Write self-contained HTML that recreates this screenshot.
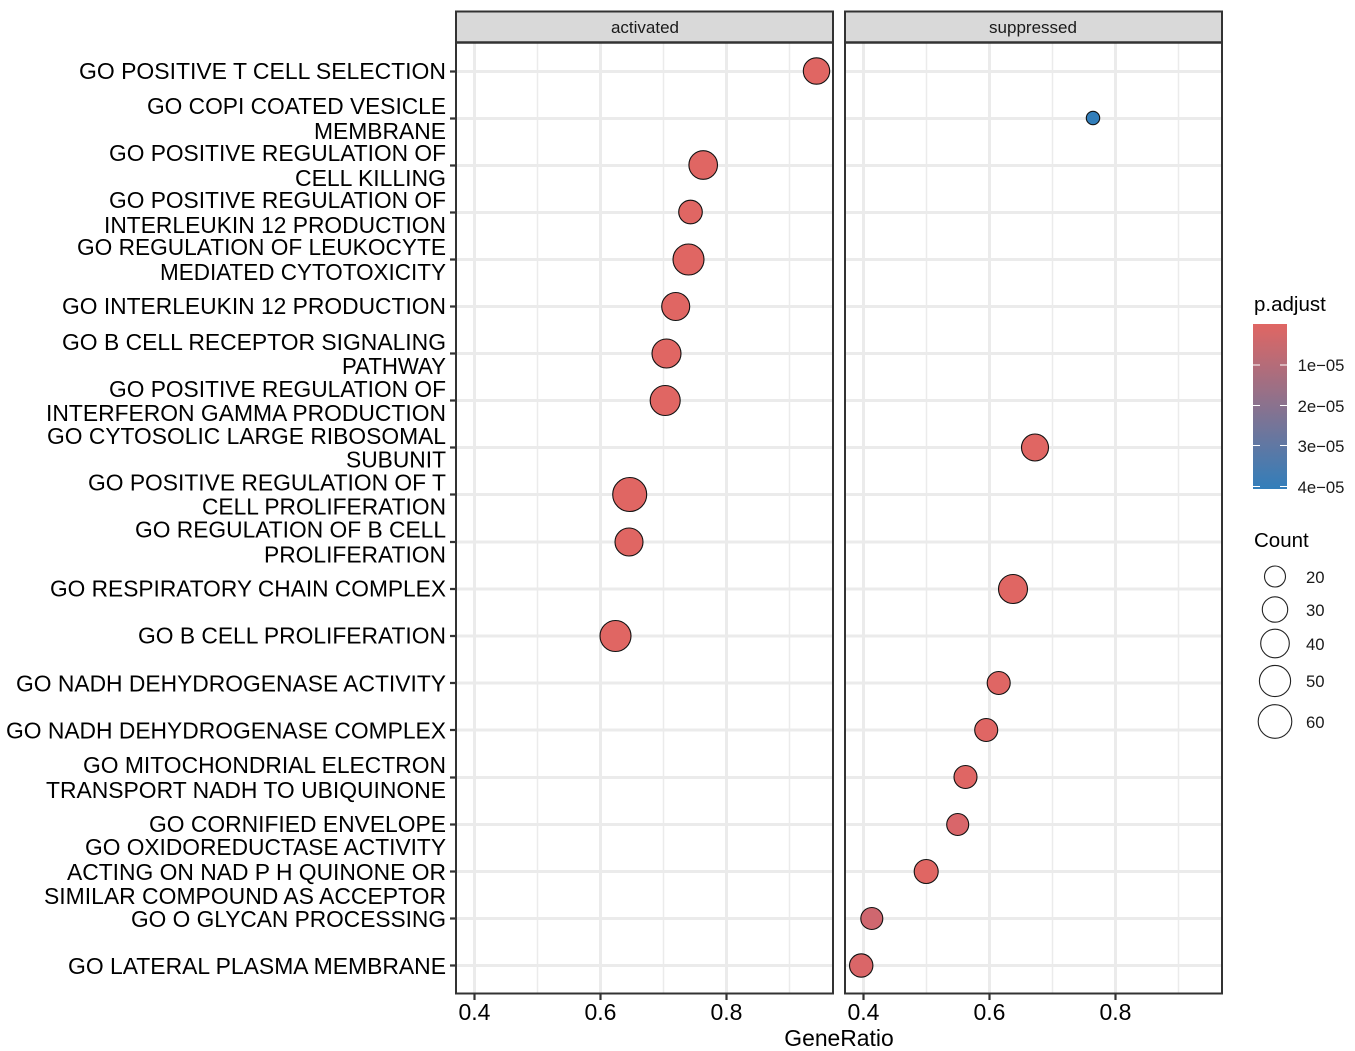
<!DOCTYPE html>
<html><head><meta charset="utf-8"><style>
html,body{margin:0;padding:0;background:#fff}
svg{display:block}
text{font-family:"Liberation Sans",Arial,sans-serif;fill:#000}
.y{font-size:22.95px;text-anchor:end}
.gM{stroke:#ebebeb;stroke-width:3;fill:none}
.gm{stroke:#ebebeb;stroke-width:1.5;fill:none}
.t{stroke:#333;stroke-width:2.2;fill:none}
.x{font-size:23px;text-anchor:middle}
.d{stroke:#111;stroke-width:1.1}
.l{font-size:16.7px;fill:#1a1a1a}
</style></head><body>
<svg width="1355" height="1051" viewBox="0 0 1355 1051" xmlns="http://www.w3.org/2000/svg">
<defs><linearGradient id="g" x1="0" y1="0" x2="0" y2="1"><stop offset="0" stop-color="#e06663"/><stop offset="1" stop-color="#327eba"/></linearGradient></defs>
<rect width="1355" height="1051" fill="#fff"/>

<!-- grid left -->
<path class="gm" d="M537.5 42V994M663.5 42V994M789.5 42V994"/>
<path class="gM" d="M474.5 42V994M600.5 42V994M726.5 42V994"/>
<!-- grid right -->
<path class="gm" d="M926.5 42V994M1052.5 42V994M1178.5 42V994"/>
<path class="gM" d="M863.5 42V994M989.5 42V994M1115.5 42V994"/>
<!-- horizontal -->
<path class="gM" d="M456 71.500H833M456 118.500H833M456 165.500H833M456 212.500H833M456 259.500H833M456 306.500H833M456 353.500H833M456 400.500H833M456 447.500H833M456 494.500H833M456 542H833M456 589H833M456 636H833M456 683H833M456 730H833M456 777.500H833M456 824.500H833M456 871.500H833M456 918.500H833M456 965.500H833"/>
<path class="gM" d="M845 71.500H1222M845 118.500H1222M845 165.500H1222M845 212.500H1222M845 259.500H1222M845 306.500H1222M845 353.500H1222M845 400.500H1222M845 447.500H1222M845 494.500H1222M845 542H1222M845 589H1222M845 636H1222M845 683H1222M845 730H1222M845 777.500H1222M845 824.500H1222M845 871.500H1222M845 918.500H1222M845 965.500H1222"/>

<!-- dots -->
<g class="d" fill="#e06663">
<circle cx="816.500" cy="71" r="13.200"/>
<circle cx="703.200" cy="165" r="14.300"/>
<circle cx="690.500" cy="212" r="11.800"/>
<circle cx="688.500" cy="259.500" r="15.500"/>
<circle cx="675.700" cy="306.500" r="14"/>
<circle cx="666.500" cy="353.500" r="14.500"/>
<circle cx="665.200" cy="400.500" r="15"/>
<circle cx="1035" cy="447.500" r="13.500"/>
<circle cx="629.700" cy="494.500" r="17"/>
<circle cx="629" cy="542" r="14"/>
<circle cx="1013" cy="589" r="14.500"/>
<circle cx="615.500" cy="636" r="15.500"/>
<circle cx="998.700" cy="683" r="11.500" fill="#df6664"/>
<circle cx="986.200" cy="730" r="11.500" fill="#df6664"/>
<circle cx="965.500" cy="777" r="11.500" fill="#df6664"/>
<circle cx="957.700" cy="824.500" r="11" fill="#d9666a"/>
<circle cx="926.200" cy="871.500" r="12"/>
<circle cx="871.800" cy="918.500" r="11" fill="#cf676f"/>
<circle cx="861.200" cy="965.500" r="11.700" fill="#da6668"/>
<circle cx="1093" cy="118" r="6.700" fill="#327eba"/>
</g>

<!-- panels -->
<rect x="456" y="11.500" width="377" height="31" fill="#d9d9d9"/>
<rect x="845" y="11.500" width="377" height="31" fill="#d9d9d9"/>
<rect x="456" y="11.500" width="377" height="982" fill="none" stroke="#333" stroke-width="2"/>
<rect x="845" y="11.500" width="377" height="982" fill="none" stroke="#333" stroke-width="2"/>
<path d="M456 42.500H833M845 42.500H1222" stroke="#333" stroke-width="2.400"/>
<text x="645" y="33" text-anchor="middle" style="font-size:17px;fill:#1a1a1a">activated</text>
<text x="1033" y="33" text-anchor="middle" style="font-size:17px;fill:#1a1a1a">suppressed</text>

<!-- y ticks -->
<path class="t" d="M450 71.500H456M450 118.500H456M450 165.500H456M450 212.500H456M450 259.500H456M450 306.500H456M450 353.500H456M450 400.500H456M450 447.500H456M450 494.500H456M450 542H456M450 589H456M450 636H456M450 683H456M450 730H456M450 777.500H456M450 824.500H456M450 871.500H456M450 918.500H456M450 965.500H456"/>
<!-- x ticks -->
<path class="t" d="M474.500 994V1000M600.500 994V1000M726.500 994V1000M863.500 994V1000M989.500 994V1000M1115.500 994V1000"/>

<!-- y labels -->
<g>
<text class="y" x="446" y="79" textLength="367" lengthAdjust="spacingAndGlyphs">GO POSITIVE T CELL SELECTION</text>
<text class="y" x="446" y="114" textLength="299" lengthAdjust="spacingAndGlyphs">GO COPI COATED VESICLE</text>
<text class="y" x="446" y="139" textLength="132" lengthAdjust="spacingAndGlyphs">MEMBRANE</text>
<text class="y" x="446" y="161" textLength="337" lengthAdjust="spacingAndGlyphs">GO POSITIVE REGULATION OF</text>
<text class="y" x="446" y="186" textLength="151" lengthAdjust="spacingAndGlyphs">CELL KILLING</text>
<text class="y" x="446" y="208" textLength="337" lengthAdjust="spacingAndGlyphs">GO POSITIVE REGULATION OF</text>
<text class="y" x="446" y="233" textLength="342" lengthAdjust="spacingAndGlyphs">INTERLEUKIN 12 PRODUCTION</text>
<text class="y" x="446" y="255" textLength="369" lengthAdjust="spacingAndGlyphs">GO REGULATION OF LEUKOCYTE</text>
<text class="y" x="446" y="280" textLength="286" lengthAdjust="spacingAndGlyphs">MEDIATED CYTOTOXICITY</text>
<text class="y" x="446" y="314" textLength="384" lengthAdjust="spacingAndGlyphs">GO INTERLEUKIN 12 PRODUCTION</text>
<text class="y" x="446" y="350" textLength="384" lengthAdjust="spacingAndGlyphs">GO B CELL RECEPTOR SIGNALING</text>
<text class="y" x="446" y="374" textLength="104" lengthAdjust="spacingAndGlyphs">PATHWAY</text>
<text class="y" x="446" y="397" textLength="337" lengthAdjust="spacingAndGlyphs">GO POSITIVE REGULATION OF</text>
<text class="y" x="446" y="421" textLength="400" lengthAdjust="spacingAndGlyphs">INTERFERON GAMMA PRODUCTION</text>
<text class="y" x="446" y="444" textLength="399" lengthAdjust="spacingAndGlyphs">GO CYTOSOLIC LARGE RIBOSOMAL</text>
<text class="y" x="446" y="467.500" textLength="100" lengthAdjust="spacingAndGlyphs">SUBUNIT</text>
<text class="y" x="446" y="490.500" textLength="358" lengthAdjust="spacingAndGlyphs">GO POSITIVE REGULATION OF T</text>
<text class="y" x="446" y="514.500" textLength="244" lengthAdjust="spacingAndGlyphs">CELL PROLIFERATION</text>
<text class="y" x="446" y="537.500" textLength="311" lengthAdjust="spacingAndGlyphs">GO REGULATION OF B CELL</text>
<text class="y" x="446" y="562.500" textLength="182" lengthAdjust="spacingAndGlyphs">PROLIFERATION</text>
<text class="y" x="446" y="596.500" textLength="396" lengthAdjust="spacingAndGlyphs">GO RESPIRATORY CHAIN COMPLEX</text>
<text class="y" x="446" y="643.500" textLength="308" lengthAdjust="spacingAndGlyphs">GO B CELL PROLIFERATION</text>
<text class="y" x="446" y="691.500" textLength="430" lengthAdjust="spacingAndGlyphs">GO NADH DEHYDROGENASE ACTIVITY</text>
<text class="y" x="446" y="738.500" textLength="440" lengthAdjust="spacingAndGlyphs">GO NADH DEHYDROGENASE COMPLEX</text>
<text class="y" x="446" y="773" textLength="363" lengthAdjust="spacingAndGlyphs">GO MITOCHONDRIAL ELECTRON</text>
<text class="y" x="446" y="798" textLength="400" lengthAdjust="spacingAndGlyphs">TRANSPORT NADH TO UBIQUINONE</text>
<text class="y" x="446" y="832" textLength="297" lengthAdjust="spacingAndGlyphs">GO CORNIFIED ENVELOPE</text>
<text class="y" x="446" y="855" textLength="361" lengthAdjust="spacingAndGlyphs">GO OXIDOREDUCTASE ACTIVITY</text>
<text class="y" x="446" y="880" textLength="379" lengthAdjust="spacingAndGlyphs">ACTING ON NAD P H QUINONE OR</text>
<text class="y" x="446" y="904" textLength="402" lengthAdjust="spacingAndGlyphs">SIMILAR COMPOUND AS ACCEPTOR</text>
<text class="y" x="446" y="927" textLength="315" lengthAdjust="spacingAndGlyphs">GO O GLYCAN PROCESSING</text>
<text class="y" x="446" y="974" textLength="378" lengthAdjust="spacingAndGlyphs">GO LATERAL PLASMA MEMBRANE</text>
</g>

<!-- x labels -->
<text class="x" x="474.500" y="1020">0.4</text>
<text class="x" x="600.500" y="1020">0.6</text>
<text class="x" x="726.500" y="1020">0.8</text>
<text class="x" x="863.500" y="1020">0.4</text>
<text class="x" x="989.500" y="1020">0.6</text>
<text class="x" x="1115.500" y="1020">0.8</text>
<text x="839" y="1046" text-anchor="middle" style="font-size:22.9px">GeneRatio</text>

<!-- colour legend -->
<text x="1254" y="311" style="font-size:20.5px">p.adjust</text>
<rect x="1253" y="324" width="34" height="165" fill="url(#g)"/>
<path stroke="#fff" stroke-width="1" fill="none" d="M1253 365H1260M1280 365H1287M1253 405.500H1260M1280 405.500H1287M1253 445.500H1260M1280 445.500H1287M1253 486.500H1260M1280 486.500H1287"/>
<text class="l" x="1297.600" y="371">1e−05</text>
<text class="l" x="1297.600" y="412">2e−05</text>
<text class="l" x="1297.600" y="452">3e−05</text>
<text class="l" x="1297.600" y="493">4e−05</text>

<!-- size legend -->
<text x="1254" y="547" style="font-size:20.5px">Count</text>
<g fill="#fff" stroke="#222" stroke-width="1.100">
<circle cx="1275" cy="576.500" r="10.500"/>
<circle cx="1275" cy="609.500" r="12.700"/>
<circle cx="1275" cy="643.500" r="14.300"/>
<circle cx="1275" cy="681" r="15.600"/>
<circle cx="1275" cy="721.500" r="16.800"/>
</g>
<text class="l" x="1306" y="583">20</text>
<text class="l" x="1306" y="616">30</text>
<text class="l" x="1306" y="650">40</text>
<text class="l" x="1306" y="687">50</text>
<text class="l" x="1306" y="728">60</text>
</svg>
</body></html>
